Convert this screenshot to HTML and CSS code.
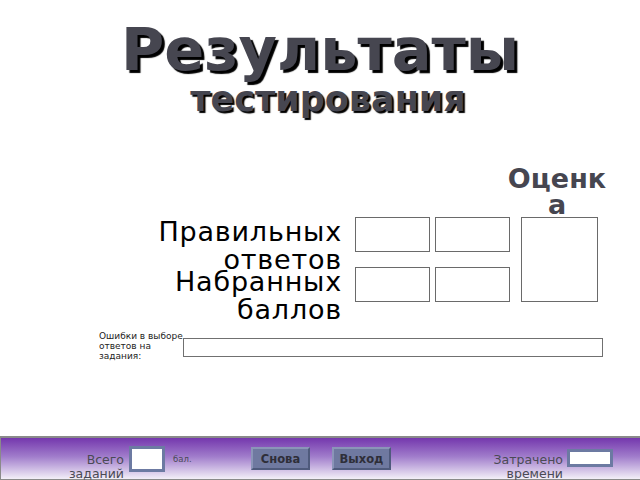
FILE: index.html
```html
<!DOCTYPE html>
<html lang="ru">
<head>
<meta charset="utf-8">
<title>Результаты тестирования</title>
<link rel="stylesheet" href="styles.css">
</head>
<body>
<div class="page">
  <header class="title">
    <h1 class="title-main">Результаты</h1>
    <h2 class="title-sub">тестирования</h2>
  </header>

  <section class="results">
    <div class="grade-head">Оценка</div>
    <div class="label label-1">Правильных ответов</div>
    <div class="box box-a1"></div>
    <div class="box box-b1"></div>
    <div class="box box-grade"></div>
    <div class="label label-2">Набранных баллов</div>
    <div class="box box-a2"></div>
    <div class="box box-b2"></div>
  </section>

  <section class="errors">
    <div class="errors-label">Ошибки в выборе ответов на задания:</div>
    <div class="errors-box"></div>
  </section>

  <footer class="bar">
    <div class="bar-label total-label">Всего заданий</div>
    <div class="bar-box total-box"></div>
    <div class="unit">бал.</div>
    <button class="btn">Снова</button>
    <button class="btn btn-exit">Выход</button>
    <div class="bar-label time-label">Затрачено времени</div>
    <div class="bar-box time-box"></div>
  </footer>
</div>
</body>
</html>
```

FILE: styles.css
```css
html, body {
  margin: 0;
  padding: 0;
  background: #ffffff;
}

.page {
  width: 640px;
  height: 480px;
  display: flex;
  flex-direction: column;
  overflow: hidden;
  font-family: "DejaVu Sans", "Liberation Sans", sans-serif;
}

.title {
  display: flex;
  flex-direction: column;
  align-items: center;
  padding-top: 22px;
}

.title-main {
  margin: 0;
  font-family: "DejaVu Sans", sans-serif;
  font-weight: bold;
  font-size: 59px;
  line-height: 56px;
  color: #464650;
  text-shadow: 3px 3px 1px #000000;
}

.title-sub {
  margin: 4px 0 0 16px;
  font-family: "DejaVu Sans", sans-serif;
  font-weight: bold;
  font-size: 35px;
  line-height: 34px;
  color: #464650;
  text-shadow: 2px 2px 1px #000000;
}

.results {
  display: grid;
  grid-template-columns: 190px 88px 80px 87px;
  grid-template-rows: 52px 50px 35px;
  margin: 49px 0 0 152px;
}

.grade-head {
  grid-column: 4;
  grid-row: 1;
  justify-self: end;
  width: 100px;
  margin-right: -10px;
  margin-top: 1px;
  text-align: center;
  font-weight: bold;
  font-size: 27px;
  line-height: 26px;
  color: #464650;
  word-break: break-all;
}

.label {
  grid-column: 1;
  text-align: right;
  font-size: 27px;
  line-height: 28px;
  letter-spacing: 0.8px;
  color: #000000;
  height: 35px;
  margin-top: 1px;
}

.label-1 { grid-row: 2; }
.label-2 { grid-row: 3; }

.box {
  justify-self: end;
  width: 75px;
  height: 35px;
  border: 1px solid #6a6a6a;
  box-sizing: border-box;
  background: #ffffff;
}

.box-a1 { grid-column: 2; grid-row: 2; }
.box-b1 { grid-column: 3; grid-row: 2; }
.box-a2 { grid-column: 2; grid-row: 3; }
.box-b2 { grid-column: 3; grid-row: 3; }

.box-grade {
  grid-column: 4;
  grid-row: 2 / 4;
  width: 77px;
  height: 85px;
  margin-right: -1px;
}

.errors {
  display: flex;
  align-items: flex-start;
  margin: 29px 0 0 99px;
}

.errors-label {
  width: 86px;
  font-size: 9px;
  line-height: 10px;
  color: #222222;
}

.errors-box {
  margin: 7px 0 0 -2px;
  width: 420px;
  height: 19px;
  box-sizing: border-box;
  border: 1px solid #707070;
  background: #ffffff;
}

.bar {
  margin-top: auto;
  height: 44px;
  box-sizing: border-box;
  border-top: 2px solid #8a8a8a;
  border-left: 1px solid #8a8a8a;
  border-bottom: 1px solid #8a8a8a;
  background: linear-gradient(to bottom, #7437ad 0%, #a07ccb 45%, #f3eff8 100%);
  display: flex;
  align-items: flex-start;
}

.bar-label {
  font-size: 12.5px;
  line-height: 14px;
  color: #4a4a55;
  text-align: right;
}

.total-label {
  width: 62px;
  margin: 15px 0 0 61px;
}

.bar-box {
  box-sizing: border-box;
  background: #ffffff;
  border: 3px solid #6c7aa2;
}

.total-box {
  width: 36px;
  height: 26px;
  margin: 8px 0 0 5px;
}

.unit {
  width: 78px;
  margin: 16px 0 0 8px;
  font-size: 8.5px;
  line-height: 10px;
  color: #4a4a55;
}

.btn {
  width: 59px;
  height: 23px;
  margin-top: 9px;
  padding: 0;
  box-sizing: border-box;
  border: 2px solid;
  border-color: #8b95b8 #4f5a7c #4f5a7c #8b95b8;
  background: #6f79a0;
  font-family: "DejaVu Sans", sans-serif;
  font-weight: bold;
  font-size: 11.5px;
  color: #2e2e38;
}

.btn-exit {
  margin-left: 22px;
}

.time-label {
  width: 80px;
  margin: 15px 0 0 92px;
}

.time-box {
  width: 46px;
  height: 18px;
  margin: 11px 0 0 4px;
}
```
